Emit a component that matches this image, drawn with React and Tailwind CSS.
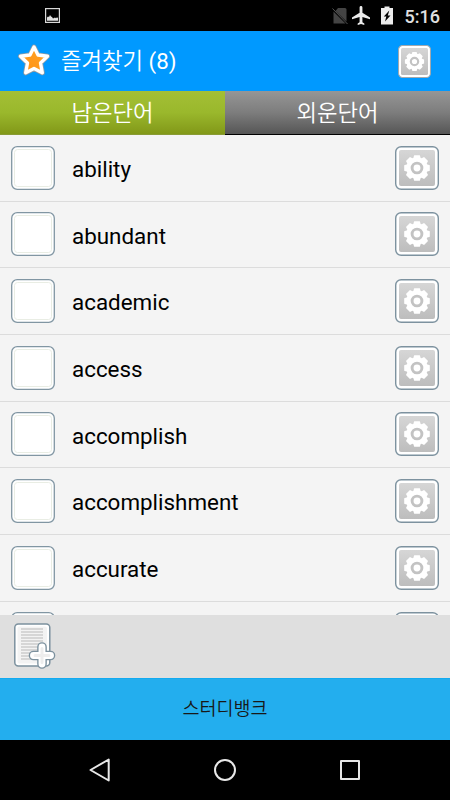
import React, { useState } from 'react';

const words = ['ability', 'abundant', 'academic', 'access', 'accomplish', 'accomplishment', 'accurate'];

const teeth = [0, 45, 90, 135, 180, 225, 270, 315];

const GearButton = ({ className, stroke }) => (
  <svg viewBox="0 0 44 44" className={className}>
    <defs>
      <linearGradient id="gearBg" x1="0" y1="0" x2="0" y2="1">
        <stop offset="0" stopColor="#d6d6d6" />
        <stop offset="1" stopColor="#bdbdbd" />
      </linearGradient>
    </defs>
    <rect x="0.7" y="0.7" width="42.6" height="42.6" rx="5.5" fill="#fff" stroke={stroke} strokeWidth="1.4" />
    <rect x="4" y="4" width="36" height="36" rx="2" fill="url(#gearBg)" />
    <g fill="#fff">
      {teeth.map((angle) => (
        <path key={angle} d="M18 13 L19.2 9.2 H24.8 L26 13 Z" transform={`rotate(${angle} 22 22)`} />
      ))}
      <circle cx="22" cy="22" r="10.6" />
    </g>
    <circle cx="22" cy="22" r="4.9" fill="#fff" stroke="#c3c3c3" strokeWidth="2.9" />
  </svg>
);

const StatusBar = () => (
  <div className="h-[31px] shrink-0 bg-black flex items-center justify-between pl-[45px] pr-[10px]">
    <svg viewBox="0 0 15 15" className="w-[15px] h-[15px]">
      <rect x="0.6" y="0.6" width="13.8" height="13.8" fill="none" stroke="#d8d8d8" strokeWidth="1.2" />
      <path d="M2 12.8 V9.5 L3 8.5 L4 9 L5 7 L6 8.5 L7 9 L8 10.5 L10 9.5 L11 10.2 L12 9.3 L13 10 V12.8 Z" fill="#e0e0e0" />
    </svg>
    <div className="flex items-center">
      <svg viewBox="0 0 17 18" className="w-[17px] h-[18px]">
        <path d="M6 1 H13 Q14.5 1 14.5 2.5 V14.5 L3.5 4 Z M1.5 4.5 V16.5 H13.5 Z" fill="#444" />
        <path d="M0.5 1.5 L15.5 17" stroke="#555" strokeWidth="1" />
      </svg>
      <svg viewBox="2 2 19 20" className="w-[18px] h-[19px] ml-[3px]">
        <path d="M21 16v-2l-8-5V3.500c0-.83-.67-1.500-1.500-1.500S10 2.670 10 3.500V9l-8 5v2l8-2.500V19l-2 1.500V22l3.500-1 3.500 1v-1.500L13 19v-5.500l8 2.500z" fill="#ececec" />
      </svg>
      <svg viewBox="0 0 12 19" className="w-[12px] h-[19px] ml-[11px]">
        <path d="M3.500 0.500 H8.500 V2 H12 V18.500 H0 V2 H3.500 Z" fill="#ececec" />
        <path d="M8.300 4.500 L2.800 10.500 H5.300 L4 15.500 L9.500 9.500 H6.800 Z" fill="#000" />
      </svg>
      <span className="ml-[12px] text-[18px] leading-none font-medium text-[#e0e0e0] pt-[2px]">5:16</span>
    </div>
  </div>
);

const Header = () => (
  <div className="h-[60px] shrink-0 bg-[#0099ff] flex items-center pl-[17px] pr-[19px]">
    <svg viewBox="0 0 34 34" className="w-[34px] h-[34px] -mt-[2px]">
      <defs>
        <linearGradient id="starFill" x1="1" y1="0" x2="0" y2="1">
          <stop offset="0" stopColor="#ffa52a" />
          <stop offset="1" stopColor="#ff9010" />
        </linearGradient>
      </defs>
      <path d="M17 4 L21 12 L30.500 13.300 L23.500 20 L25.300 29.800 L17 25.500 L8.700 29.800 L10.500 20 L3.500 13.300 L13 12 Z" fill="#8c9aa5" stroke="#8c9aa5" strokeWidth="5" strokeLinejoin="round" />
      <path d="M17 4 L21 12 L30.500 13.300 L23.500 20 L25.300 29.800 L17 25.500 L8.700 29.800 L10.500 20 L3.500 13.300 L13 12 Z" fill="url(#starFill)" stroke="#fff" strokeWidth="3.400" strokeLinejoin="round" />
    </svg>
    <h1 className="ml-[10px] mt-px flex-1 text-[22.300px] leading-none font-[350] text-white">즐겨찾기 <span className="font-normal">(8)</span></h1>
    <GearButton className="w-[33px] h-[33px]" stroke="#a0a8ae" />
  </div>
);

const Checkbox = () => (
  <svg viewBox="0 0 44 44" className="w-[44px] h-[44px]">
    <rect x="0.7" y="0.7" width="42.600" height="42.600" rx="5.500" fill="#fff" stroke="#8196a3" strokeWidth="1.300" />
    <rect x="3.500" y="3.500" width="37" height="37" rx="3" fill="none" stroke="#e9ede4" strokeWidth="1" />
  </svg>
);

const WordRow = ({ word }) => (
  <div className="h-[66.67px] shrink-0 border-b border-[#dcdcdc] flex items-center pl-[11px] pr-[11px] pb-[0.5px]">
    <Checkbox />
    <span className="ml-[17px] mt-[3px] flex-1 text-[22.400px] leading-none text-black">{word}</span>
    <GearButton className="w-[44px] h-[44px]" stroke="#7d929f" />
  </div>
);

const AddListIcon = () => (
  <svg viewBox="0 0 42 46" className="w-[42px] h-[46px]">
    <rect x="0.800" y="1" width="35" height="42" rx="3.500" fill="#fff" stroke="#7c919e" strokeWidth="1.500" />
    <rect x="3.500" y="3.500" width="29.500" height="37" rx="2" fill="#f3f3f3" />
    {[7.500, 10.500, 13.500, 16.500, 19.500, 22.500, 25.500, 28.500, 31.500, 34.500, 37.500].map((y) => (
      <path key={y} d={`M7 ${y - 1.5} H29`} stroke="#bdbdbd" strokeWidth="1.100" />
    ))}
    <path d="M28 24 V41 M19.500 32.500 H36.500" stroke="#7c919e" strokeWidth="9.600" strokeLinecap="round" />
    <path d="M28 24 V41 M19.500 32.500 H36.500" stroke="#fff" strokeWidth="6.900" strokeLinecap="round" />
    <path d="M28 25.500 V39.500 M21 32.500 H35" stroke="#ededed" strokeWidth="3" strokeLinecap="round" />
  </svg>
);

const App = () => {
  const [tab, setTab] = useState('left');

  return (
    <div className="w-[450px] h-[800px] overflow-hidden flex flex-col bg-[#f4f4f4] font-[Roboto,'Noto_Sans_CJK_KR',sans-serif]">
      <StatusBar />
      <Header />
      <div className="h-[44px] shrink-0 grid grid-cols-2 text-[22.300px] leading-none font-[350] text-white">
        <button onClick={() => setTab('left')} aria-pressed={tab === 'left'} className="pt-px bg-linear-to-b from-[#a3bf35] via-[#9ab82c] to-[#829818] border-b border-[#899b34]">남은단어</button>
        <button onClick={() => setTab('done')} aria-pressed={tab === 'done'} className="pt-px bg-linear-to-b from-[#969696] via-[#7d7d7d] to-[#565656] border-b border-black">외운단어</button>
      </div>
      <div className="h-[480px] shrink-0 overflow-hidden flex flex-col">
        {words.map((word) => (
          <WordRow key={word} word={word} />
        ))}
        {/* next row, just peeking in */}
        <WordRow word="" />
      </div>
      <div className="h-[63px] shrink-0 bg-[#dfdfdf] pl-[14px] pt-[8px]">
        <AddListIcon />
      </div>
      <div className="h-[62px] shrink-0 bg-[#23aeee] border-t border-[#12aaf0] flex items-center justify-center">
        <span className="text-[18.500px] leading-none font-[350] text-[#181818]">스터디뱅크</span>
      </div>
      <div className="h-[60px] shrink-0 bg-black flex items-center justify-between pl-[88px] pr-[90px]">
        <svg viewBox="0 0 24 24" className="w-[24px] h-[24px]">
          <path d="M2.500 12 L20.700 1.500 V22.500 Z" fill="none" stroke="#e8e8e8" strokeWidth="2" strokeLinejoin="round" />
        </svg>
        <div className="w-[22px] h-[22px] -ml-[3px] rounded-full border-2 border-[#e8e8e8]"></div>
        <div className="w-[20px] h-[20px] rounded-[1px] border-2 border-[#e8e8e8]"></div>
      </div>
    </div>
  );
};

export default App;
